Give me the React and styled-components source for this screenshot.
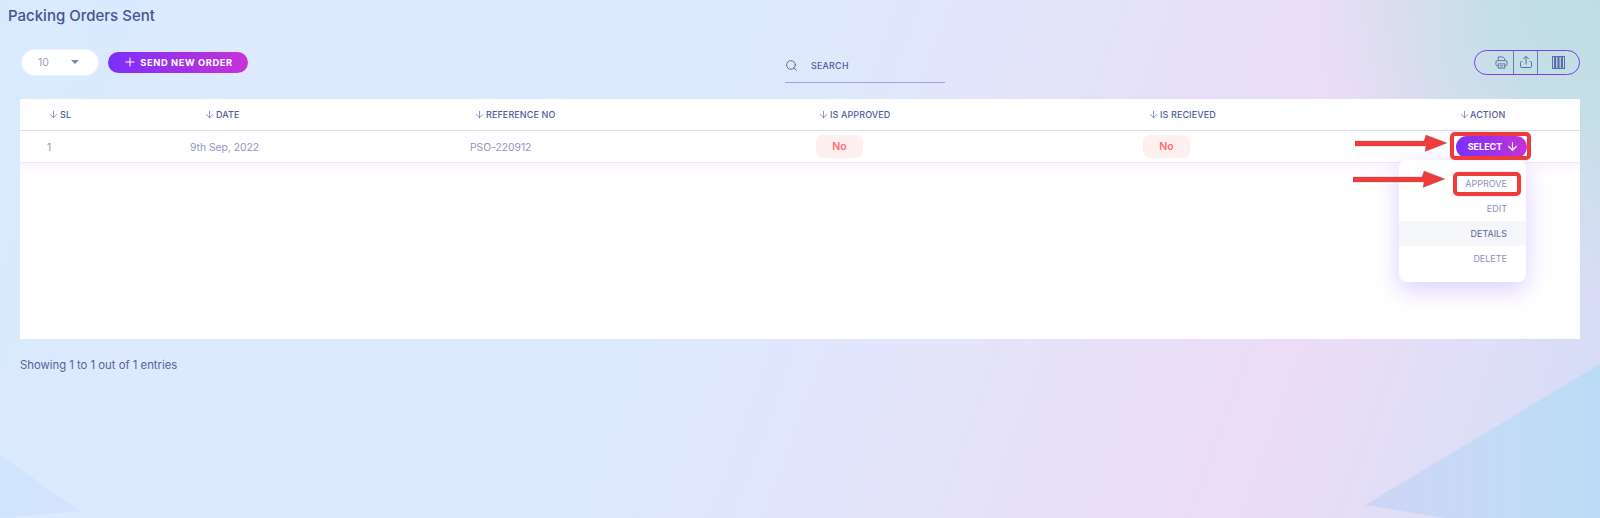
import React from "react";
import styled, { createGlobalStyle } from "styled-components";
import { ArrowDown, Plus, Search } from "lucide-react";

const Global = createGlobalStyle`
  html, body { margin: 0; padding: 0; height: 100%; }
  body { font-family: Inter, "Liberation Sans", sans-serif; overflow: hidden; }
  * { box-sizing: border-box; }
`;

const Page = styled.div`
  position: relative;
  width: 1600px;
  height: 518px;
  overflow: hidden;
  background:
    radial-gradient(ellipse 290px 300px at 100% 0, #bfdee3 0%, #c4dfe6 35%, rgba(200, 222, 236, 0) 100%),
    linear-gradient(110deg, #d8ebfe 0%, #dce9fe 14%, #dde9fe 43%, #e0e7fc 51%, #e6e1f9 67%, #eddcf6 79%, #e0def7 89%, #d3dcf6 100%);
`;

const TriangleRight = styled.div`
  position: absolute;
  left: 1365px;
  top: 364px;
  width: 235px;
  height: 154px;
  background: linear-gradient(90deg, #d0d4f6 0%, #c3dbf6 60%, #bbdcf6 100%);
  clip-path: polygon(0 141px, 100% 0, 100% 100%, 80px 100%);
  pointer-events: none;
`;

const TriangleLeft = styled.div`
  position: absolute;
  left: 0;
  top: 455px;
  width: 80px;
  height: 63px;
  background: linear-gradient(90deg, #cfe5fe 0%, #d6e1fe 100%);
  clip-path: polygon(0 0, 100% 56px, 0 100%);
  pointer-events: none;
`;

const Content = styled.main`
  position: relative;
  display: flex;
  flex-direction: column;
`;

const Title = styled.h1`
  margin: 0;
  padding: 6px 0 0 8px;
  height: 41px;
  font-size: 15px;
  line-height: 19px;
  font-weight: 500;
  color: #47538f;
`;

const Toolbar = styled.div`
  display: grid;
  grid-template-columns: 764px 1fr auto;
  align-items: center;
  height: 58px;
  padding: 0 20px 16px 21px;
`;

const LeftTools = styled.div`
  display: flex;
  align-items: center;
  gap: 9px;
`;

const PageSize = styled.div`
  width: 78px;
  height: 27px;
  border-radius: 14px;
  background: #fff;
  border: 1px solid #eef1fd;
  display: flex;
  align-items: center;
  justify-content: space-between;
  padding: 0 19px 0 16px;
  font-size: 10.5px;
  color: #9aa0c6;
`;

const Caret = styled.span`
  width: 0;
  height: 0;
  border-left: 4px solid transparent;
  border-right: 4px solid transparent;
  border-top: 4px solid #7b84b0;
`;

const GradientButton = styled.button`
  border: 0;
  display: inline-flex;
  align-items: center;
  justify-content: center;
  background: linear-gradient(90deg, #7b2ffc 0%, #c633d6 100%);
  color: #fff;
  font-family: inherit;
  font-weight: 700;
  border-radius: 11px;
  padding: 0;
`;

const SendButton = styled(GradientButton)`
  width: 140px;
  height: 21px;
  gap: 3px;
  font-size: 9.3px;
  letter-spacing: 0.6px;
`;

const SearchBox = styled.div`
  align-self: end;
  width: 160px;
  height: 32px;
  display: flex;
  align-items: center;
  gap: 13px;
  border-bottom: 1px solid #99a3d4;
  font-size: 8.8px;
  font-weight: 500;
  color: #4f5b9b;
  letter-spacing: 0.3px;
  padding-bottom: 2px;
  svg { flex: none; }
`;

const IconGroup = styled.div`
  width: 106px;
  height: 25px;
  border: 1px solid #7c3df0;
  border-radius: 13px;
  display: grid;
  grid-template-columns: 39px 24px 1fr;
  color: #5d6aa8;
`;

const IconCell = styled.div`
  display: flex;
  align-items: center;
  justify-content: ${(p) => p.$justify || "center"};
  padding-right: ${(p) => p.$pad || 0}px;
  border-right: ${(p) => (p.$divider ? "1px solid #6f78b4" : "0")};
`;

const Card = styled.section`
  margin: 0 20px;
  height: 240px;
  background: #fff;
  position: relative;
`;

const HeadRow = styled.div`
  display: grid;
  grid-template-columns: 156px 270px 344px 330px 311px 1fr;
  padding-left: 28px;
  align-items: center;
  height: 32px;
  border-bottom: 1px solid #dcdbef;
`;

const HeadCell = styled.div`
  display: flex;
  align-items: center;
  gap: ${(p) => (p.$tight ? 0 : 1)}px;
  font-size: 9px;
  font-weight: 500;
  color: #4f5b9b;
  letter-spacing: 0.1px;
`;

const BodyRow = styled.div`
  display: grid;
  grid-template-columns: 143px 280px 346px 327px 313px 1fr;
  padding-left: 27px;
  align-items: center;
  height: 32px;
  border-bottom: 1px solid #f2e6f6;
  font-size: 10.3px;
  color: #8f95bf;
`;

const Fade = styled.div`
  height: 14px;
  background: linear-gradient(180deg, #fbf5fd, #ffffff);
`;

const StatusPill = styled.span`
  display: inline-flex;
  align-items: center;
  justify-content: center;
  width: 47px;
  height: 23px;
  border-radius: 7px;
  background: #fdf0ef;
  color: #fb6f6f;
  font-weight: 600;
  font-size: 10.5px;
`;

const SelectButton = styled(GradientButton)`
  width: 71px;
  height: 22px;
  gap: 4px;
  padding-left: 4px;
  font-size: 9px;
`;

const Menu = styled.div`
  position: absolute;
  left: 1379px;
  top: 61px;
  width: 127px;
  height: 122px;
  background: #fff;
  border-radius: 8px;
  padding-top: 11px;
  box-shadow: 0 8px 24px rgba(130, 80, 250, 0.28);
`;

const MenuItem = styled.div`
  height: 25px;
  display: flex;
  align-items: center;
  justify-content: flex-end;
  padding-right: 19px;
  font-size: 9px;
  color: ${(p) => (p.$active ? "#5a659f" : "#8a91bd")};
  background: ${(p) => (p.$active ? "#f6f7fa" : "transparent")};
`;

const Footer = styled.div`
  margin: 19px 0 0 20px;
  font-size: 11.3px;
  color: #56619d;
`;

const Highlight = styled.div`
  position: absolute;
  left: ${(p) => p.$x}px;
  top: ${(p) => p.$y}px;
  width: ${(p) => p.$w}px;
  height: ${(p) => p.$h}px;
  border: 4px solid #ef3b3b;
  border-radius: 5px;
  box-shadow: 0 0 1px rgba(60, 60, 60, 0.5);
  pointer-events: none;
`;

const Arrow = styled.svg`
  position: absolute;
  left: ${(p) => p.$x}px;
  top: ${(p) => p.$y}px;
  pointer-events: none;
`;

const RedArrow = ({ x, y }) => (
  <Arrow $x={x} $y={y} width="94" height="20" viewBox="0 0 94 20">
    <path d="M0 7h69L71 1L92 9 70 17.500 71 12H0z" fill="#ef3b3b" stroke="#8a5a5a" strokeWidth="0.3" />
  </Arrow>
);

const PrinterIcon = () => (
  <svg width="13" height="13" viewBox="0 0 14 14" fill="none" stroke="currentColor" strokeWidth="1">
    <path d="M3.500 5V1h5l2 2v2" />
    <rect x="1" y="5" width="12" height="5.500" rx="1.500" />
    <rect x="3.500" y="8.500" width="7" height="4.500" fill="#dfe1f5" />
    <path d="M5 10.200h4M5 11.800h4" strokeWidth="0.7" />
  </svg>
);

const UploadIcon = () => (
  <svg width="14" height="14" viewBox="0 0 14 14" fill="none" stroke="currentColor" strokeWidth="1">
    <path d="M7 9.500V1.500M4.300 4 7 1.300 9.700 4" />
    <path d="M3.500 6.500H2.500a1 1 0 0 0-1 1v4a1 1 0 0 0 1 1h9a1 1 0 0 0 1-1v-4a1 1 0 0 0-1-1h-1" />
  </svg>
);

const ColumnsIcon = () => (
  <svg width="13" height="13" viewBox="0 0 13 13" fill="none" stroke="currentColor">
    <rect x="0.500" y="0.500" width="12" height="12" strokeWidth="1" />
    <rect x="2" y="1" width="2.200" height="11" fill="currentColor" stroke="none" />
    <rect x="5.400" y="1" width="2.200" height="11" fill="currentColor" stroke="none" />
    <rect x="8.800" y="1" width="2.200" height="11" fill="currentColor" stroke="none" />
  </svg>
);

const headers = ["SL", "DATE", "REFERENCE NO", "IS APPROVED", "IS RECIEVED", "ACTION"];
const items = ["APPROVE", "EDIT", "DETAILS", "DELETE"];

export default function App() {
  return (
    <Page>
      <Global />
      <TriangleRight />
      <TriangleLeft />
      <Content>
        <Title>Packing Orders Sent</Title>
        <Toolbar>
          <LeftTools>
            <PageSize>
              10
              <Caret />
            </PageSize>
            <SendButton>
              <Plus size={14} strokeWidth={1.8} />
              SEND NEW ORDER
            </SendButton>
          </LeftTools>
          <SearchBox>
            <Search size={13} strokeWidth={1.6} />
            SEARCH
          </SearchBox>
          <IconGroup>
            <IconCell $divider $justify="flex-end" $pad={5}><PrinterIcon /></IconCell>
            <IconCell $divider><UploadIcon /></IconCell>
            <IconCell><ColumnsIcon /></IconCell>
          </IconGroup>
        </Toolbar>
        <Card>
          <HeadRow>
            {headers.map((h) => (
              <HeadCell key={h} $tight={h === "ACTION"}>
                <ArrowDown size={11} strokeWidth={1.4} />
                {h}
              </HeadCell>
            ))}
          </HeadRow>
          <BodyRow>
            <div>1</div>
            <div>9th Sep, 2022</div>
            <div>PSO-220912</div>
            <div><StatusPill>No</StatusPill></div>
            <div><StatusPill>No</StatusPill></div>
            <div>
              <SelectButton>
                SELECT
                <ArrowDown size={13} strokeWidth={2.2} />
              </SelectButton>
            </div>
          </BodyRow>
          <Fade />
          <Menu>
            {items.map((i) => (
              <MenuItem key={i} $active={i === "DETAILS"}>{i}</MenuItem>
            ))}
          </Menu>
        </Card>
        <Footer>Showing 1 to 1 out of 1 entries</Footer>
      </Content>
      <Highlight $x={1450} $y={132} $w={81} $h={28} />
      <Highlight $x={1453} $y={172} $w={68} $h={24} />
      <RedArrow x={1355} y={134} />
      <RedArrow x={1353} y={170} />
    </Page>
  );
}
